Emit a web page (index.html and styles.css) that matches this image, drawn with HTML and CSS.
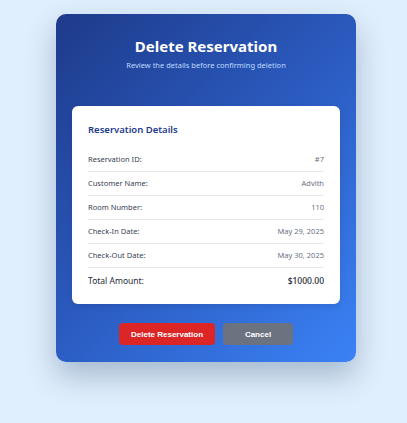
FILE: index.html
```html
<!DOCTYPE html>
<html>
<head>
<meta charset="utf-8">
<link rel="stylesheet" href="styles.css">
</head>
<body>
<div class="page">
  <div class="modal">
    <div class="header">
      <h1 class="title">Delete Reservation</h1>
      <p class="subtitle">Review the details before confirming deletion</p>
    </div>
    <div class="card">
      <h2 class="card-title">Reservation Details</h2>
      <div class="row"><span class="label">Reservation ID:</span><span class="value">#7</span></div>
      <div class="row"><span class="label">Customer Name:</span><span class="value">Advith</span></div>
      <div class="row"><span class="label">Room Number:</span><span class="value">110</span></div>
      <div class="row"><span class="label">Check-In Date:</span><span class="value">May 29, 2025</span></div>
      <div class="row"><span class="label">Check-Out Date:</span><span class="value">May 30, 2025</span></div>
      <div class="row total"><span class="label">Total Amount:</span><span class="value">$1000.00</span></div>
    </div>
    <div class="actions">
      <button class="btn btn-delete">Delete Reservation</button>
      <button class="btn btn-cancel">Cancel</button>
    </div>
  </div>
</div>
</body>
</html>
```
FILE: styles.css
```css
html, body {
  margin: 0;
  padding: 0;
}
body {
  background: #e0effd;
  font-family: "Noto Sans", "Open Sans", sans-serif;
  width: 407px;
  height: 423px;
}
.page {
  display: flex;
  justify-content: center;
  padding-top: 14px;
  padding-left: 5px;
}
.modal {
  width: 300px;
  box-sizing: border-box;
  border-radius: 10px;
  background: linear-gradient(135deg, #1e3a8a 0%, #2b5bc0 50%, #3b82f6 100%);
  box-shadow: 0 14px 30px rgba(30, 58, 100, 0.3);
  padding: 22px 16px 17px;
}
.header {
  text-align: center;
}
.title {
  margin: 0;
  color: #ffffff;
  font-size: 15px;
  line-height: 20px;
  font-weight: 700;
}
.subtitle {
  margin: 4px 0 0;
  color: #bfdbfe;
  font-size: 7.5px;
  line-height: 10px;
}
.card {
  margin-top: 36px;
  background: #ffffff;
  border-radius: 6px;
  padding: 17px 16px 16px;
  box-shadow: 0 2px 6px rgba(0,0,0,0.1);
}
.card-title {
  margin: 0 0 11px;
  color: #1e3a8a;
  font-size: 9.5px;
  line-height: 14px;
  font-weight: 600;
}
.row {
  display: flex;
  justify-content: space-between;
  align-items: center;
  padding: 5px 0;
  line-height: 13px;
  font-size: 7.5px;
  border-bottom: 1px solid #e5e7eb;
}
.label {
  color: #374151;
  font-weight: 400;
}
.value {
  color: #6b7280;
}
.row.total {
  border-bottom: none;
  padding: 5px 0 0;
  line-height: 15px;
  font-size: 8.5px;
}
.row.total .label {
  color: #1f2937;
}
.row.total .value {
  color: #1f2937;
  font-weight: 500;
}
.actions {
  display: flex;
  justify-content: center;
  gap: 8px;
  margin-top: 19px;
}
.btn {
  border: none;
  border-radius: 4px;
  height: 22px;
  color: #ffffff;
  font-family: "Liberation Sans", Arial, sans-serif;
  font-weight: 700;
  font-size: 8px;
  padding: 0;
}
.btn-delete {
  background: #dc2626;
  width: 96px;
}
.btn-cancel {
  background: #6b7280;
  width: 70px;
}
```
